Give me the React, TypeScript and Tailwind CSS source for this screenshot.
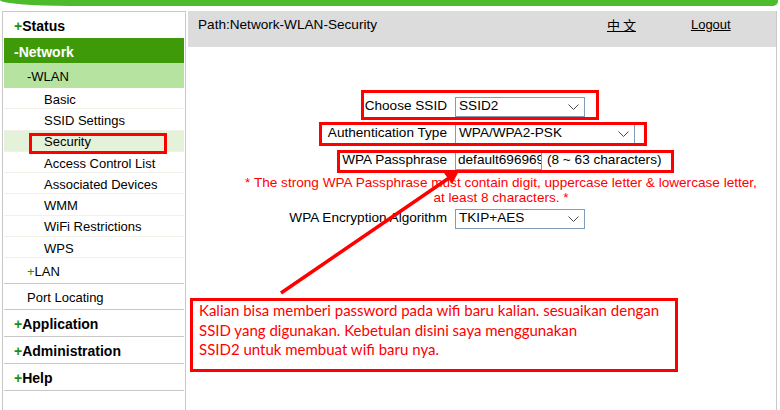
import React from "react";

const Chevron = () => (
  <svg width="11" height="6" viewBox="0 0 11 6" className="shrink-0">
    <polyline points="0.5,0.5 5.5,5.5 10.5,0.5" fill="none" stroke="#4a4a4a" strokeWidth="1" />
  </svg>
);

const Select = ({ w, value }: { w: string; value: string }) => (
  <div className={`flex items-center justify-between h-[20px] border border-[#7f9db9] bg-white pl-[3px] pr-[5px] ${w}`}>
    <span className="whitespace-nowrap">{value}</span>
    <Chevron />
  </div>
);

const MainRow = ({ plus, label, white, bg }: { plus?: boolean; label: string; white?: boolean; bg?: string }) => (
  <div className={`flex items-center h-[26px] pl-[10px] pt-[3px] font-bold text-[14px] ${bg ?? ""} ${white ? "text-white" : "text-black"}`}>
    {plus ? <span className="text-[#1f8f12] text-[14px] font-bold">+</span> : null}
    <span>{label}</span>
  </div>
);

const SubItem = ({ label, active }: { label: string; active?: boolean }) => (
  <div className={`flex items-center h-[21.25px] pl-[40px] pt-[3px] border-b border-[#f1f1ea] ${active ? "bg-[#e3f2d8]" : ""}`}>
    {label}
  </div>
);

export default function App() {
  return (
    <div className="relative w-[780px] h-[410px] overflow-hidden bg-white text-[13px] text-black font-['Liberation_Sans',Arial,sans-serif]">
      <div className="h-[6px] bg-[#4cbb2c] rounded-bl-[70px_6px] rounded-br-[5px] mr-[2px]" />
      <div className="flex mt-[5px] h-[399px]">
        {/* Sidebar */}
        <div className="ml-[2px] w-[184px] border-l border-r border-t border-[#c8c8c8] px-px">
          <MainRow plus label="Status" />
          <div className="flex items-center h-[25px] pl-[10px] pt-[3px] font-bold text-[14px] text-white bg-[#3f9a0a]">-Network</div>
          <div className="flex items-center h-[25px] pl-[23px] pt-[3px] bg-[#b6e4a0]">-WLAN</div>
          <SubItem label="Basic" />
          <SubItem label="SSID Settings" />
          <SubItem label="Security" active />
          <SubItem label="Access Control List" />
          <SubItem label="Associated Devices" />
          <SubItem label="WMM" />
          <SubItem label="WiFi Restrictions" />
          <SubItem label="WPS" />
          <div className="flex items-center h-[26px] pl-[23px] pt-[3px] border-b border-[#c8c8c8]">
            <span className="text-[#1f8f12]">+</span>LAN
          </div>
          <div className="flex items-center h-[26px] pl-[23px] pt-[3px] border-b border-[#c8c8c8]">Port Locating</div>
          <div className="border-b border-[#c8c8c8]"><MainRow plus label="Application" /></div>
          <div className="border-b border-[#c8c8c8]"><MainRow plus label="Administration" /></div>
          <div className="border-b border-[#c8c8c8]"><MainRow plus label="Help" /></div>
        </div>

        {/* Main */}
        <div className="ml-[2px] w-[589px] border-r border-[#c8c8c8] text-[13.6px]">
          <div className="flex h-[36px] bg-[#dcdcdc] pl-[10px] pt-[6px] leading-[16px]">
            <span className="w-[409px] whitespace-nowrap">Path:Network-WLAN-Security</span>
            <span className="underline text-[13px] font-['Noto_Sans_CJK_SC','Liberation_Sans',sans-serif]">中 文</span>
            <span className="ml-[55px] underline text-[13px]">Logout</span>
          </div>

          <div className="mt-[46px]">
            <div className="flex items-center h-[27px]">
              <div className="w-[259px] text-right">Choose SSID</div>
              <div className="ml-[8px]"><Select w="w-[130px]" value="SSID2" /></div>
            </div>
            <div className="flex items-center h-[27px]">
              <div className="w-[259px] text-right">Authentication Type</div>
              <div className="ml-[8px]"><Select w="w-[180px]" value="WPA/WPA2-PSK" /></div>
            </div>
            <div className="flex items-center h-[27px]">
              <div className="w-[259px] text-right">WPA Passphrase</div>
              <div className="ml-[8px] flex items-center">
                <div className="h-[20px] w-[87px] border border-[#7f9db9] pl-[2px] overflow-hidden whitespace-nowrap leading-[18px]">default696969</div>
                <span className="ml-[5px] whitespace-nowrap">(8 ~ 63 characters)</span>
              </div>
            </div>
            <div className="mt-[1px] text-[#ff0000] text-center leading-[15px] pl-[38px] whitespace-nowrap">
              * The strong WPA Passphrase must contain digit, uppercase letter &amp; lowercase letter,
              <br />
              at least 8 characters. *
            </div>
            <div className="flex items-center h-[27px]">
              <div className="w-[259px] text-right">WPA Encryption Algorithm</div>
              <div className="ml-[8px]"><Select w="w-[130px]" value="TKIP+AES" /></div>
            </div>
          </div>
        </div>
      </div>

      {/* Annotation overlays */}
      <div className="absolute left-[29px] top-[133px] w-[138px] h-[21px] border-[3px] border-[#ff0000]" />
      <div className="absolute left-[361px] top-[90px] w-[238px] h-[30px] border-[3px] border-[#ff0000]" />
      <div className="absolute left-[319px] top-[122px] w-[328px] h-[24px] border-[3px] border-[#ff0000]" />
      <div className="absolute left-[337px] top-[150px] w-[337px] h-[23px] border-[3px] border-[#ff0000]" />

      <svg className="absolute left-0 top-0" width="780" height="410" viewBox="0 0 780 410">
        <line x1="281" y1="293" x2="449" y2="178" stroke="#ff0000" strokeWidth="3.5" />
        <polygon points="459,171 452,184 444,173" fill="#ff0000" />
      </svg>

      <div className="absolute left-[190px] top-[298px] w-[488px] h-[74px] border-[3px] border-[#ff0000] bg-white pl-[6px] text-[15px] leading-[19.5px] text-[#ff0000] font-['Lato','Open_Sans',sans-serif] whitespace-nowrap">
        Kalian bisa memberi password pada wifi baru kalian. sesuaikan dengan
        <br />
        SSID yang digunakan. Kebetulan disini saya menggunakan
        <br />
        SSID2 untuk membuat wifi baru nya.
      </div>
    </div>
  );
}
